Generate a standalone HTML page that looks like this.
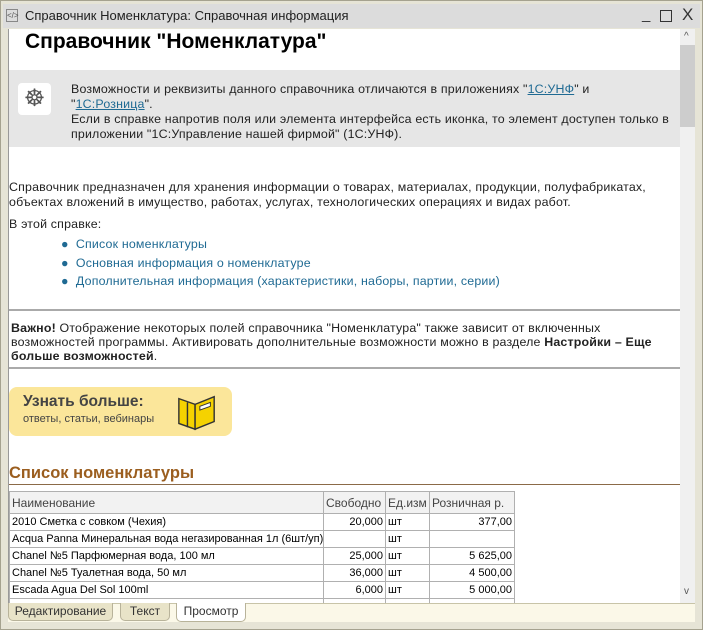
<!DOCTYPE html>
<html><head><meta charset="utf-8"><style>
*{margin:0;padding:0;box-sizing:border-box}
body{width:703px;height:630px;background:#ece9d8;font-family:"Liberation Sans",sans-serif;position:relative;overflow:hidden;font-size:12px;color:#000}
.a{position:absolute;white-space:nowrap}
.t{font-size:12.4px;letter-spacing:0.18px}
#win{left:0;top:0;width:703px;height:630px;border:1px solid #a5a28f;background:#e6e4d6}
#title{left:3px;top:4px;width:697px;height:24px;background:#dcdcdc}
#content{left:8px;top:29px;width:672px;height:574px;background:#fff;overflow:hidden;border-left:1px solid #999}
#sb{left:680px;top:29px;width:15px;height:574px;background:#f0f0f0}
.u{color:#1f6a93;text-decoration:underline}
td{border:1px solid #b0b0b0;font-size:11px;padding:0 2px;height:17px;white-space:nowrap;overflow:hidden}
table{border-collapse:collapse;position:absolute;left:0;top:462px;table-layout:fixed;width:505px}
.r{text-align:right}
</style></head><body>
<div class="a" id="win"></div>
<div class="a" id="title"></div>
<div class="a" style="left:6px;top:9px;width:12px;height:13px;border:1px solid #888;font-size:8px;line-height:11px;text-align:center;color:#555">&lt;/&gt;</div>
<div class="a" style="left:25px;top:8px;font-size:13px;color:#222">Справочник Номенклатура: Справочная информация</div>
<div class="a" style="left:642px;top:6px;font-size:15px;color:#333">_</div>
<div class="a" style="left:660px;top:10px;width:12px;height:12px;border:1px solid #333"></div>
<div class="a" style="left:682px;top:5px;font-size:17px;color:#333">X</div>
<div class="a" id="content">
 <div class="a" style="left:16px;top:1px;font-size:21px;font-weight:bold">Справочник "Номенклатура"</div>
 <div class="a" style="left:0;top:41px;width:672px;height:77px;background:#e6e6e6"></div>
 <div class="a" style="left:9px;top:54px;width:33px;height:32px;background:#fff;border-radius:4px;font-size:24px;line-height:32px;text-align:center;color:#555">☸</div>
 <div class="a t" style="left:62px;top:53px;line-height:15px;color:#222">Возможности и реквизиты данного справочника отличаются в приложениях "<span class="u">1С:УНФ</span>" и<br>"<span class="u">1С:Розница</span>".<br>Если в справке напротив поля или элемента интерфейса есть иконка, то элемент доступен только в<br>приложении "1С:Управление нашей фирмой" (1С:УНФ).</div>
 <div class="a t" style="left:0;top:151px;line-height:15px;color:#222">Справочник предназначен для хранения информации о товарах, материалах, продукции, полуфабрикатах,<br>объектах вложений в имущество, работах, услугах, технологических операциях и видах работ.</div>
 <div class="a t" style="left:0;top:188px;color:#222">В этой справке:</div>
 <div class="a t" style="left:52px;top:206px;color:#1f6a93;line-height:18.5px">●&nbsp; Список номенклатуры<br>●&nbsp; Основная информация о номенклатуре<br>●&nbsp; Дополнительная информация (характеристики, наборы, партии, серии)</div>
 <div class="a" style="left:0;top:280px;width:672px;height:2px;background:#aaa"></div>
 <div class="a t" style="left:2px;top:292px;line-height:14px;color:#222"><b>Важно!</b> Отображение некоторых полей справочника "Номенклатура" также зависит от включенных<br>возможностей программы. Активировать дополнительные возможности можно в разделе <b>Настройки – Еще</b><br><b>больше возможностей</b>.</div>
 <div class="a" style="left:0;top:338px;width:672px;height:2px;background:#aaa"></div>
 <div class="a" style="left:0;top:358px;width:223px;height:49px;background:#fbe69a;border-radius:8px"></div>
 <div class="a" style="left:14px;top:364px;font-size:15.5px;font-weight:bold;color:#444">Узнать больше:</div>
 <div class="a" style="left:14px;top:384px;font-size:11px;color:#444">ответы, статьи, вебинары</div>
 <svg class="a" style="left:167px;top:363px" width="42" height="40" viewBox="0 0 44 40"><path d="M3 6 L20 12 L20 38 L3 32Z" fill="#f5d200" stroke="#333" stroke-width="1.5"/><path d="M20 12 L40 4 L40 30 L20 38Z" fill="#f5d200" stroke="#333" stroke-width="1.5"/><path d="M12 10 L12 36" stroke="#333" stroke-width="1.5"/><path d="M25 14 L36 10 L36 14 L25 18Z" fill="#fff" stroke="#333"/></svg>
 <div class="a" style="left:0;top:435px;font-size:16.5px;font-weight:bold;color:#9b5e1f">Список номенклатуры</div>
 <div class="a" style="left:0;top:455px;width:672px;height:1px;background:#8b6a48"></div>
 <table>
  <col style="width:314px"><col style="width:62px"><col style="width:44px"><col style="width:85px">
  <tr style="background:#f2f2f2"><td style="height:22px;font-size:12px;color:#444">Наименование</td><td style="font-size:12px;color:#444">Свободно</td><td style="font-size:12px;color:#444">Ед.изм</td><td style="font-size:12px;color:#444">Розничная р.</td></tr>
  <tr><td>2010 Сметка с совком (Чехия)</td><td class="r">20,000</td><td>шт</td><td class="r">377,00</td></tr>
  <tr><td>Acqua Panna Минеральная вода негазированная 1л (6шт/уп)</td><td></td><td>шт</td><td></td></tr>
  <tr><td>Chanel №5 Парфюмерная вода, 100 мл</td><td class="r">25,000</td><td>шт</td><td class="r">5 625,00</td></tr>
  <tr><td>Chanel №5 Туалетная вода, 50 мл</td><td class="r">36,000</td><td>шт</td><td class="r">4 500,00</td></tr>
  <tr><td>Escada Agua Del Sol 100ml</td><td class="r">6,000</td><td>шт</td><td class="r">5 000,00</td></tr>
  <tr><td>&nbsp;</td><td></td><td></td><td></td></tr>
 </table>
</div>
<div class="a" id="sb"></div>
<div class="a" style="left:680px;top:45px;width:15px;height:82px;background:#cdcdcd"></div>
<div class="a" style="left:684px;top:31px;font-size:10px;color:#555">^</div>
<div class="a" style="left:684px;top:586px;font-size:10px;color:#555">v</div>
<div class="a" style="left:8px;top:603px;width:687px;height:19px;background:#fbf8e8;border-top:1px solid #c8c4a8"></div>
<div class="a" style="left:8px;top:603px;width:105px;height:18px;background:#e8e3c8;border:1px solid #b8b39a;border-top:none;border-radius:0 0 5px 5px;font-size:12px;text-align:center;line-height:17px;color:#333">Редактирование</div>
<div class="a" style="left:120px;top:603px;width:50px;height:18px;background:#e8e3c8;border:1px solid #b8b39a;border-top:none;border-radius:0 0 5px 5px;font-size:12px;text-align:center;line-height:17px;color:#333">Текст</div>
<div class="a" style="left:176px;top:603px;width:70px;height:19px;background:#fff;border:1px solid #b8b39a;border-top:none;border-radius:0 0 5px 5px;font-size:12px;text-align:center;line-height:17px;color:#333">Просмотр</div>
</body></html>
